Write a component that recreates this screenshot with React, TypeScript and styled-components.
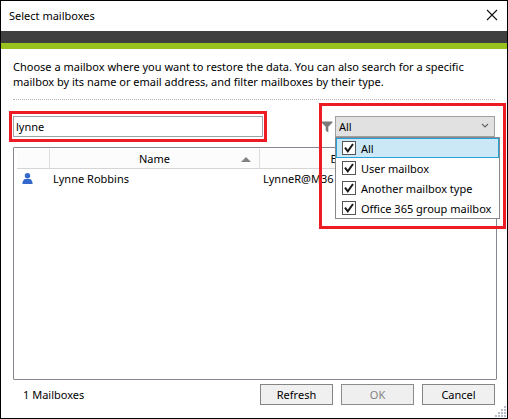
import React, { useState } from "react";
import styled, { createGlobalStyle } from "styled-components";

const GlobalStyle = createGlobalStyle`
  *, *::before, *::after { box-sizing: border-box; }
  body { margin: 0; background: #fff; }
  body, input, select, button, table {
    font-family: "Noto Sans", "Open Sans", sans-serif;
    font-size: 11px;
    line-height: 15px;
    color: #000;
  }
`;

const Dialog = styled.main`
  display: flex;
  flex-direction: column;
  min-height: 100vh;
  border: 1px solid #000;
  background: #fff;
`;

const TitleBar = styled.header`
  display: flex;
  align-items: center;
  justify-content: space-between;
  height: 30px;
  padding: 0 9px 2px 8px;
`;

const Title = styled.h1`
  margin: 0;
  font-size: 11px;
  font-weight: 400;
`;

const CloseButton = styled.button`
  display: flex;
  padding: 0;
  border: 0;
  background: none;
`;

const Band = styled.div`
  height: 18px;
  background: #404040;
  border-bottom: 6px solid #98c21d;
`;

const Content = styled.div`
  flex: 1;
  display: flex;
  flex-direction: column;
  padding: 10px 10px 0 12px;
`;

const Intro = styled.p`
  margin: 0 2px 0 0;
  padding-bottom: 10px;
  border-bottom: 1px dotted #b4b4b4;
  white-space: pre-line;
`;

const Toolbar = styled.div`
  display: flex;
  align-items: center;
  justify-content: space-between;
  padding: 16px 2px 10px 0;
`;

const Highlight = styled.div<{ $inset: string }>`
  position: relative;
  display: flex;
  align-items: center;
  &::after {
    content: "";
    position: absolute;
    z-index: 3;
    inset: ${(p) => p.$inset};
    border: 3px solid #ed1c24;
    pointer-events: none;
  }
`;

const SearchInput = styled.input`
  width: 250px;
  height: 21px;
  padding: 0 2px;
  border: 1px solid #a0a2aa;
  background: #fff;
  outline: none;
`;

const Filter = styled.div`
  position: relative;
  width: 160px;
  margin-left: 2px;
`;

const FilterSelect = styled.select`
  appearance: none;
  display: block;
  width: 100%;
  height: 21px;
  padding: 0 24px 0 3px;
  border: 1px solid #a0a0a0;
  border-radius: 0;
  background: #e1e1e1;
`;

const Chevron = styled.svg`
  position: absolute;
  top: 7px;
  right: 6px;
  pointer-events: none;
`;

const Menu = styled.div`
  position: absolute;
  z-index: 2;
  top: 21px;
  left: 0;
  min-width: 165px;
  border: 1px solid #898989;
  background: #fff;
`;

const MenuRow = styled.label<{ $active?: boolean }>`
  display: flex;
  align-items: center;
  gap: 5px;
  height: 20px;
  padding: 0 4px 0 5px;
  white-space: nowrap;
  border: 1px solid ${(p) => (p.$active ? "#26a0da" : "transparent")};
  background: ${(p) => (p.$active ? "#cbe8f6" : "#fff")};
`;

const CheckCell = styled.span`
  position: relative;
  display: flex;
  svg {
    position: absolute;
    inset: 0;
    pointer-events: none;
  }
`;

const CheckBox = styled.input`
  appearance: none;
  width: 14px;
  height: 14px;
  margin: 0;
  border: 1px solid #555;
  background: #fff;
`;

const ListFrame = styled.section`
  flex: 1;
  padding: 1px 3px;
  border: 1px solid #828790;
  border-radius: 1px;
`;

const List = styled.table`
  width: 100%;
  table-layout: fixed;
  border-collapse: separate;
  border-spacing: 0;
`;

const HeadCell = styled.th<{ $width?: number }>`
  position: relative;
  width: ${(p) => (p.$width ? `${p.$width}px` : "auto")};
  height: 20px;
  padding: 0;
  font-weight: 400;
  text-align: center;
  background: #fcfcfc;
  border-bottom: 1px solid #d5d5d5;
  border-right: 1px solid #dedede;
  &:last-child {
    padding-right: 20px;
    border-right: 0;
  }
`;

const SortMark = styled.svg`
  position: absolute;
  top: 8px;
  right: 8px;
`;

const Cell = styled.td`
  height: 18px;
  padding: 0 3px;
  white-space: nowrap;
`;

const PersonIcon = styled.svg`
  display: block;
  margin-left: 2px;
`;

const Footer = styled.footer`
  position: relative;
  display: flex;
  align-items: center;
  justify-content: space-between;
  padding: 4px 12px 13px 22px;
`;

const Actions = styled.div`
  display: flex;
  gap: 8px;
`;

const ActionButton = styled.button`
  width: 73px;
  height: 21px;
  padding: 0;
  border: 1px solid #858585;
  background: #f0f0f0;
  &:disabled { color: #838383; border-color: #8c8c8c; background: #efefef; }
`;

const Grip = styled.svg`
  position: absolute;
  right: 1px;
  bottom: 1px;
`;

const mailboxTypes = ["All", "User mailbox", "Another mailbox type", "Office 365 group mailbox"];
const gripDots = [[9, 0], [6, 3], [9, 3], [3, 6], [6, 6], [9, 6], [0, 9], [3, 9], [6, 9], [9, 9]];

export default function App() {
  const [query, setQuery] = useState("lynne");

  return (
    <>
      <GlobalStyle />
      <Dialog>
        <TitleBar>
          <Title>Select mailboxes</Title>
          <CloseButton aria-label="Close">
            <svg width="12" height="12" viewBox="0 0 12 12" fill="none" stroke="#111" strokeWidth="1.1">
              <path d="M1 1 11 11M11 1 1 11" />
            </svg>
          </CloseButton>
        </TitleBar>
        <Band />
        <Content>
          <Intro>
            {"Choose a mailbox where you want to restore the data. You can also search for a specific\nmailbox by its name or email address, and filter mailboxes by their type."}
          </Intro>
          <Toolbar>
            <Highlight $inset="-5px -4px">
              <SearchInput aria-label="Search mailboxes" value={query} onChange={(e) => setQuery(e.target.value)} />
            </Highlight>
            <Highlight $inset="-13px -11px -92px -2px">
              <svg width="12" height="12" viewBox="0 0 12 12" fill="#7a7a7a" aria-hidden="true">
                <path d="M0.5 0.5H11.5V1.5L7.3 5.8V11.5L4.7 9.6V5.8L0.5 1.5Z" />
              </svg>
              <Filter>
                <FilterSelect aria-label="Mailbox type">
                  <option>All</option>
                </FilterSelect>
                <Chevron width="8" height="6" viewBox="0 0 8 6" fill="none" stroke="#666" strokeWidth="1.2">
                  <path d="M1 1 4 4 7 1" />
                </Chevron>
                <Menu>
                  {mailboxTypes.map((type, i) => (
                    <MenuRow key={type} $active={i === 0}>
                      <CheckCell>
                        <CheckBox type="checkbox" defaultChecked />
                        <svg width="14" height="14" viewBox="0 0 14 14" fill="none" stroke="#1c1c1c" strokeWidth="2">
                          <path d="M3 6.7 5.8 10.3 11 3" />
                        </svg>
                      </CheckCell>
                      {type}
                    </MenuRow>
                  ))}
                </Menu>
              </Filter>
            </Highlight>
          </Toolbar>
          <ListFrame>
            <List>
              <thead>
                <tr>
                  <HeadCell $width={33} aria-label="Kind" />
                  <HeadCell $width={210}>
                    Name
                    <SortMark width="10" height="5" viewBox="0 0 10 5" fill="#828282">
                      <path d="M5 0 10 5H0Z" />
                    </SortMark>
                  </HeadCell>
                  <HeadCell>Email address</HeadCell>
                </tr>
              </thead>
              <tbody>
                <tr>
                  <Cell>
                    <PersonIcon width="11" height="11" viewBox="0 0 11 11" fill="#3568cd">
                      <circle cx="5.5" cy="2.7" r="2.7" />
                      <path d="M0.5 11V9.3L1.8 6.8Q2.2 6 3.2 6H7.8Q8.8 6 9.2 6.8L10.5 9.3V11Z" />
                    </PersonIcon>
                  </Cell>
                  <Cell>Lynne Robbins</Cell>
                  <Cell>LynneR@M36</Cell>
                </tr>
              </tbody>
            </List>
          </ListFrame>
        </Content>
        <Footer>
          <span>1 Mailboxes</span>
          <Actions>
            <ActionButton>Refresh</ActionButton>
            <ActionButton disabled>OK</ActionButton>
            <ActionButton>Cancel</ActionButton>
          </Actions>
          <Grip width="11" height="11" viewBox="0 0 11 11" fill="#b4bccb">
            {gripDots.map(([x, y]) => (
              <rect key={`${x}-${y}`} x={x} y={y} width="2" height="2" />
            ))}
          </Grip>
        </Footer>
      </Dialog>
    </>
  );
}
